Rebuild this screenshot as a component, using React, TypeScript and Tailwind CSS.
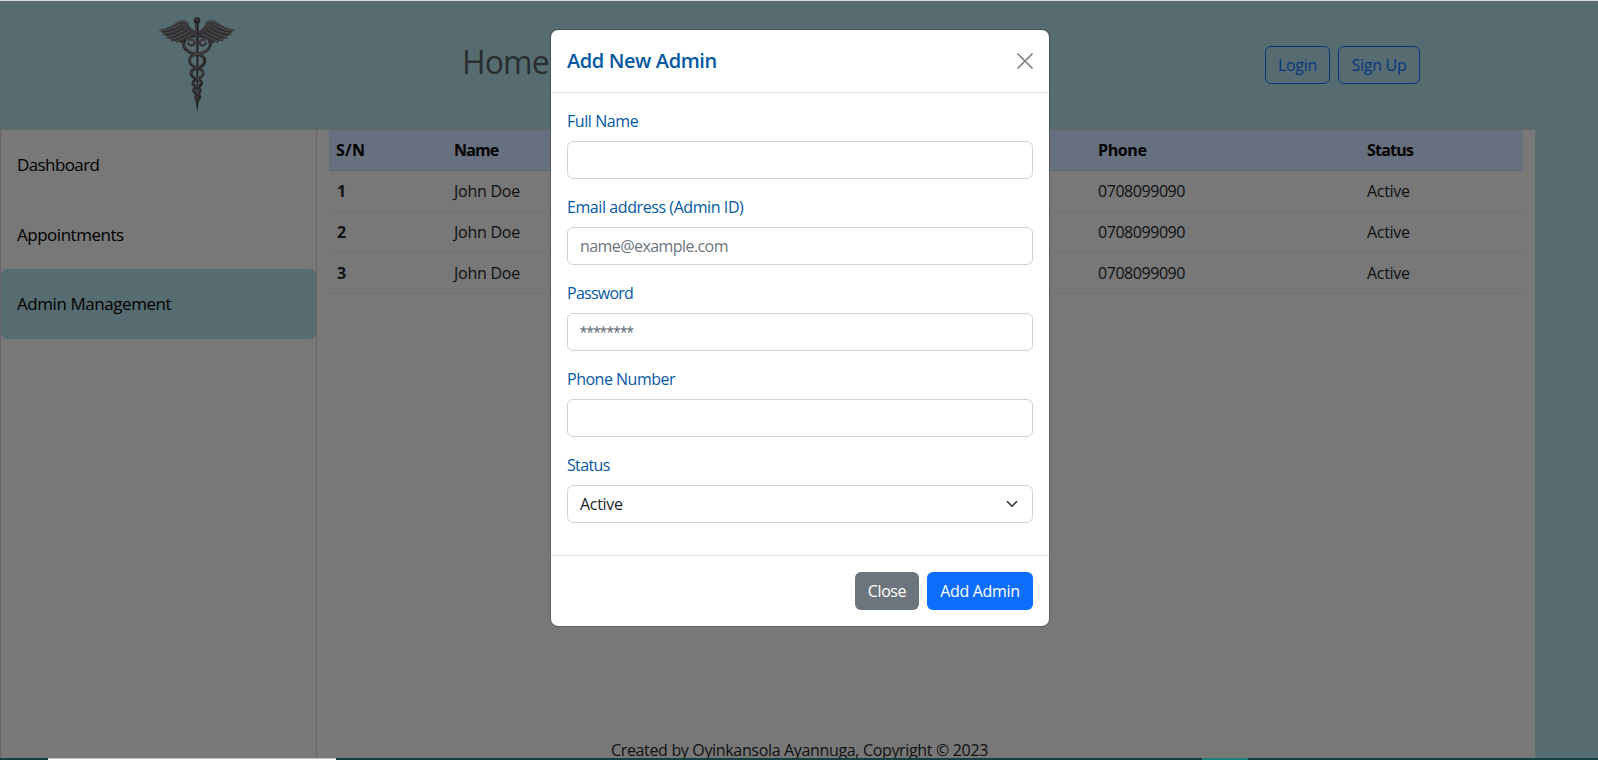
import React from "react";
import clsx from "clsx";

function Caduceus() {
  return (
    <svg width="84" height="104" viewBox="0 0 84 104" fill="none" strokeLinecap="round" strokeLinejoin="round">
      {[false, true].map((flip) => (
        <g key={String(flip)} transform={flip ? "translate(84 0) scale(-1 1)" : undefined}>
          <path
            d="M3.6 17.8 C9 17 14 15.5 18.5 12.5 C22 9.5 25 8 28.5 8.2 C32 8.5 34 10.5 33.4 12.6 C35 15 37 17.5 40.5 19.5 V25.5 C36 26 32 26.5 28.5 29 L26.5 32 L24.5 29.8 L21.5 31 L20 28.6 L16 29.4 L15.5 26.8 L11.5 26.6 L11.6 24 L7.4 22.8 L8 20.8 Z"
            fill="#6e6e73"
          />
          <path
            d="M5 18.3 C13 19 20 15 25 12.5 M8.5 21.2 C15 21 21 18.5 27 15 M12 24.6 C18 23.5 23 21.5 29.5 17.5 M16 27.2 C21 26 26 24 32 20 M20.5 29.2 C25 27.5 29 25.5 36 22.5"
            stroke="#949398"
            strokeWidth="1.1"
          />
          <path
            d="M7 19.8 C14 20 21 17 26 14 M11.8 23.2 C17 22.5 23 20 29 16.5 M15.5 26 C20 25 26 22 31.5 19 M20 28.5 C25 26.5 30 24 35 21.5 M25.5 30 C29 27 33 25.5 39 24"
            stroke="#4b4a4f"
            strokeWidth="0.9"
          />
          <path d="M20 12.3 C24 9.2 29 8.2 32 11 C33 13 30 14 27.5 13" stroke="#99989c" strokeWidth="1" />
          <path d="M34 28 C37 26.5 40 29 39 32 C37 34.5 33.5 33.5 33 31" stroke="#65656b" strokeWidth="2.2" />
          <path d="M34.5 29.2 H38.5" stroke="#a3a2a6" strokeWidth="1" />
        </g>
      ))}
      <path d="M40.2 10 H43.8 L43.3 60 L42.2 99.5 L41.4 60 Z" fill="#434247" />
      <path d="M41.6 12 V56" stroke="#85848a" strokeWidth="0.9" />
      <circle cx="42" cy="8.6" r="3.3" fill="#4c4b50" />
      <path d="M40.6 7.4 H42.4" stroke="#908f94" strokeWidth="1.2" />
      <path
        d="M30 28 C26 35 32 41 42 42 C52 44 52 53 43 55.5 C34 58 34 64 42 67 C48 70 47.5 73 42.5 75 C37 77.5 38 80 42.5 82 C46 84 44.5 87 42 89"
        stroke="#4f4e53"
        strokeWidth="3.2"
      />
      <path
        d="M54 28 C58 35 52 41 42 42 C32 44 32.5 52 41 55.5 C51 58.5 50 64 42 67 C36 70 37 73 42 75 C47 77.5 46 80 42.5 82 C39.5 84 40.5 87 42.3 89"
        stroke="#5c5b61"
        strokeWidth="3"
      />
      <path
        d="M28.8 31 C29 37 33 40 41 41.5 C50 43.5 51.5 51 43 54.8 C35 57 34 62 41 65.5 C47 69 46 72 41.5 74.3 M54.5 36 C52 39.5 46 41.5 43 42 C33.5 44 33 50 39 53.8 M46 58 C50 60.5 47.5 64 43 66 M39 77.5 C39 79.5 42 80.5 44 82"
        stroke="#96959b"
        strokeWidth="0.9"
      />
      <path d="M40.5 85 L43.5 87 M41.8 91 V94" stroke="#807f84" strokeWidth="0.8" />
      <path d="M40.8 89 L42.2 100 L43.8 89 Z" fill="#48474c" />
    </svg>
  );
}

const menu = [
  { label: "Dashboard", tracking: "tracking-[-0.6px]", active: false },
  { label: "Appointments", tracking: "tracking-[-0.48px]", active: false },
  { label: "Admin Management", tracking: "tracking-[-0.44px]", active: true },
];

const cols = "grid grid-cols-[117px_322px_323px_268px_164px]";

function Label({ children, className }: { children: React.ReactNode; className: string }) {
  return <label className={clsx("mb-2 block leading-6 text-[#0558a3]", className)}>{children}</label>;
}

const field =
  "flex h-[38px] w-full items-center rounded-md border border-[#ced4da] bg-white px-3 text-base leading-6 text-[#212529] outline-none placeholder:text-[#6c757d] placeholder:opacity-100";

function AddAdminDialog() {
  return (
    <div className="w-[500px] rounded-lg border border-black/20 bg-white bg-clip-padding">
      <div className="flex h-[63px] items-center justify-between border-b border-[#dee2e6] px-4">
        <h5 className="text-[20px] leading-[30px] font-[560] tracking-[-0.4px] text-[#0558a3]">Add New Admin</h5>
        <button className="opacity-50" aria-label="Close">
          <svg width="16" height="16" viewBox="0 0 16 16" className="block" fill="none" stroke="#000" strokeWidth="1.7" strokeLinecap="round">
            <path d="M1 1 L15 15 M15 1 L1 15" />
          </svg>
        </button>
      </div>
      <div className="px-4 pt-4 pb-8">
        <div className="mb-4">
          <Label className="tracking-[-0.42px]">Full Name</Label>
          <input className={field} />
        </div>
        <div className="mb-4">
          <Label className="tracking-[-0.42px]">Email address (Admin ID)</Label>
          <input className={clsx(field, "tracking-[-0.57px]")} placeholder="name@example.com" />
        </div>
        <div className="mb-4">
          <Label className="tracking-[-0.75px]">Password</Label>
          <input className={clsx(field, "font-[Roboto,sans-serif] tracking-[-0.2px]")} placeholder="********" />
        </div>
        <div className="mb-4">
          <Label className="tracking-[-0.5px]">Phone Number</Label>
          <input className={field} />
        </div>
        <div>
          <Label className="tracking-[-0.65px]">Status</Label>
          <div className={clsx(field, "justify-between tracking-[-0.3px]")}>
            <span>Active</span>
            <svg width="16" height="12" viewBox="0 0 16 16" fill="none" stroke="#343a40" strokeWidth="2.3" strokeLinecap="round" strokeLinejoin="round">
              <path d="m2 5 6 6 6-6" />
            </svg>
          </div>
        </div>
      </div>
      <div className="flex h-[71px] items-center justify-end gap-2 border-t border-[#dee2e6] px-4">
        <button className="h-[38px] w-16 rounded-md bg-[#6c757d] font-medium tracking-[-0.4px] text-white">Close</button>
        <button className="h-[38px] w-[106px] rounded-md bg-[#0d6efd] font-medium tracking-[-0.3px] text-white">Add Admin</button>
      </div>
    </div>
  );
}

export default function App() {
  return (
    <div className="relative flex h-[760px] w-[1598px] flex-col overflow-hidden bg-[#add8e0] font-['Open_Sans',sans-serif] text-base text-[#212529]">
      <div className="h-px shrink-0 bg-[#dcdcdc]" />
      <header className="flex h-[128px] shrink-0 pl-[155px]">
        <div className="w-[307px] pt-[11px]">
          <Caduceus />
        </div>
        <h2 className="w-[803px] pt-[42px] text-[32px] leading-[38px] font-[520] tracking-[-0.9px] text-[#545b61]">Home</h2>
        <div className="flex gap-2 pt-[45px]">
          <button className="h-[38px] w-[65px] rounded-md border border-[#0d6efd] tracking-[-0.3px] text-[#0d6efd]">Login</button>
          <button className="h-[38px] w-[82px] rounded-md border border-[#0d6efd] tracking-[-0.3px] text-[#0d6efd]">Sign Up</button>
        </div>
      </header>
      <div className="flex h-[629px] w-[1535px] shrink-0 border-t border-l border-[#ccc8cc] bg-[#f0f0f0]">
        <nav className="w-[316px] shrink-0 border-r border-[#ccc8cc]">
          {menu.map((m) => (
            <div
              key={m.label}
              className={clsx("flex h-[69.7px] items-center rounded-md px-4 text-[17px] text-black", m.tracking, m.active && "bg-[#add8e0]")}
            >
              {m.label}
            </div>
          ))}
        </nav>
        <main className="ml-3 w-[1194px]">
          <div className={clsx(cols, "h-[41px] items-center border-b border-[#bacbe6] bg-[#cfe0ff] font-bold text-black")}>
            <span className="pl-[7px] tracking-[0.3px]">S/N</span>
            <span className="pl-2 tracking-[-0.85px]">Name</span>
            <span className="pl-2 tracking-[-0.5px]">Email</span>
            <span className="pl-[7px] tracking-[-0.4px]">Phone</span>
            <span className="pl-2 tracking-[-0.8px]">Status</span>
          </div>
          {[1, 2, 3].map((n) => (
            <div key={n} className={clsx(cols, "h-[41px] items-center border-b border-[#dee2e6]")}>
              <span className="pl-2 font-bold">{n}</span>
              <span className="pl-2 tracking-[-0.25px]">John Doe</span>
              <span className="pl-2" />
              <span className="pl-[7px] tracking-[-0.45px]">0708099090</span>
              <span className="pl-2 tracking-[-0.3px]">Active</span>
            </div>
          ))}
        </main>
      </div>
      <footer className="absolute inset-x-0 top-[738px] pl-px text-center leading-6 tracking-[-0.34px]">
        Created by Oyinkansola Ayannuga, Copyright © 2023
      </footer>
      <div className="absolute inset-x-0 top-px bottom-[2px] flex items-start justify-center bg-black/50 pt-7">
        <div className="pl-[2px]">
          <AddAdminDialog />
        </div>
      </div>
      <div className="absolute inset-x-0 bottom-0 flex h-[2px] bg-[#14403f]">
        <div className="ml-12 w-[288px] border-t border-[#c4bebe] bg-white" />
        <div className="ml-[866px] w-[46px] bg-[#1b8079]" />
      </div>
    </div>
  );
}
